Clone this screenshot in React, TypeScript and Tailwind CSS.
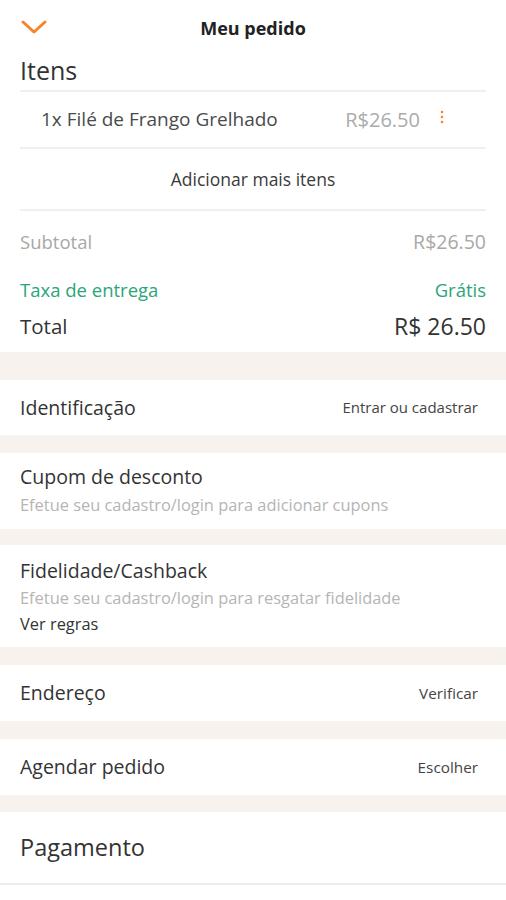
import React from "react";

const font = { fontFamily: "'Open Sans', Lato, sans-serif" };

function Band({ h = "h-[18px]" }: { h?: string }) {
  return <div className={`${h} bg-[#f7f2ee]`} />;
}

export default function App() {
  return (
    <div style={font} className="w-[506px] h-[900px] bg-white text-[#383838] overflow-hidden">
      {/* header */}
      <div className="relative h-[56px] flex items-center justify-center">
        <svg className="absolute left-[21px] top-[20px]" width="26" height="15" viewBox="0 0 26 15">
          <path d="M2 2 L13 12 L24 2" fill="none" stroke="#f7842a" strokeWidth="3" strokeLinecap="round" strokeLinejoin="round" />
        </svg>
        <span className="text-[18px] font-bold text-[#222]">Meu pedido</span>
      </div>

      <div className="px-5">
        <div className="h-[34px] flex items-center text-[25px] text-[#333] -mt-[2px]">Itens</div>
        <div className="h-[2px] bg-[#f0f0f0] mt-[2px]" />
        <div className="h-[55px] flex items-center pl-[21px] pr-[42px]">
          <span className="text-[19px] text-[#4a4a4a] flex-1">1x Filé de Frango Grelhado</span>
          <span className="text-[20px] text-[#ababab]">R$26.50</span>
          <svg className="ml-[20px] -mt-[5px]" width="4" height="14" viewBox="0 0 4 14">
            <circle cx="2" cy="2" r="1.3" fill="#f7842a" />
            <circle cx="2" cy="7" r="1.3" fill="#f7842a" />
            <circle cx="2" cy="12" r="1.3" fill="#f7842a" />
          </svg>
        </div>
        <div className="h-[2px] bg-[#f0f0f0]" />
        <div className="h-[60px] flex items-center justify-center text-[17.5px] text-[#3a3a3a]">Adicionar mais itens</div>
        <div className="h-[2px] bg-[#f0f0f0]" />
        <div className="h-[62px] flex items-center justify-between text-[#a8a8a8]">
          <span className="text-[18.5px]">Subtotal</span>
          <span className="text-[19.5px]">R$26.50</span>
        </div>
        <div className="h-[34px] flex items-center justify-between text-[18.5px] text-[#2aa57a]">
          <span>Taxa de entrega</span>
          <span>Grátis</span>
        </div>
        <div className="h-[38px] mb-[7px] flex items-center justify-between text-[#333]">
          <span className="text-[20.5px]">Total</span>
          <span className="text-[23px]">R$ 26.50</span>
        </div>
      </div>

      <Band h="h-[28px]" />
      <div className="h-[55px] px-5 flex items-center justify-between">
        <span className="text-[19.5px] text-[#333]">Identificação</span>
        <span className="text-[15px] text-[#444] mr-[8px]">Entrar ou cadastrar</span>
      </div>
      <Band />
      <div className="h-[76px] px-5 flex flex-col pt-[12px]">
        <span className="text-[19.5px] text-[#333] leading-[24px]">Cupom de desconto</span>
        <span className="text-[16.4px] text-[#b5b5b5] leading-[20px] mt-[6px]">Efetue seu cadastro/login para adicionar cupons</span>
      </div>
      <Band h="h-[16px]" />
      <div className="h-[102px] px-5 flex flex-col pt-[14px]">
        <span className="text-[19.5px] text-[#333] leading-[24px]">Fidelidade/Cashback</span>
        <span className="text-[16.4px] text-[#b5b5b5] leading-[20px] mt-[5px]">Efetue seu cadastro/login para resgatar fidelidade</span>
        <span className="text-[16.4px] text-[#333] leading-[20px] mt-[6px]">Ver regras</span>
      </div>
      <Band />
      <div className="h-[56px] px-5 flex items-center justify-between">
        <span className="text-[19.5px] text-[#333]">Endereço</span>
        <span className="text-[15.3px] text-[#444] mr-[8px]">Verificar</span>
      </div>
      <Band />
      <div className="h-[56px] px-5 flex items-center justify-between">
        <span className="text-[19.5px] text-[#333]">Agendar pedido</span>
        <span className="text-[15.3px] text-[#444] mr-[8px]">Escolher</span>
      </div>
      <Band h="h-[17px]" />
      <div className="h-[71px] px-5 flex items-center">
        <span className="text-[23.5px] text-[#333]">Pagamento</span>
      </div>
      <div className="h-[2px] bg-[#ececec]" />
    </div>
  );
}
